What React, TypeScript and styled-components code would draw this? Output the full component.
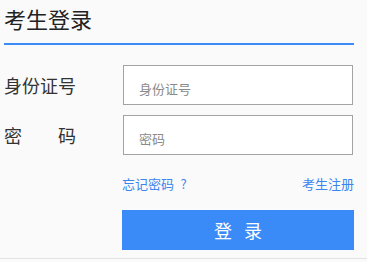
import styled, { createGlobalStyle } from "styled-components";
import { useState } from "react";

const GlobalStyle = createGlobalStyle`
  html, body {
    margin: 0;
    padding: 0;
    background-color: #fafafa;
    font-family: "Noto Sans CJK SC", "Noto Sans", sans-serif;
  }
`;

const Panel = styled.div`
  width: 367px;
  height: 259px;
  box-sizing: border-box;
  padding: 0 13px 0 4px;
  border-bottom: 1px solid #e3e3e3; /* linha cinza no rodapé */
`;

const Title = styled.h2`
  margin: 0;
  height: 43px;
  line-height: 36px;
  font-size: 22px;
  font-weight: normal;
  color: #222;
  border-bottom: 2px solid #3a8bf5;
`;

const Form = styled.form`
  margin-top: 20px;
  display: flex;
  flex-direction: column;
  gap: 10px;
`;

const Row = styled.div`
  display: grid;
  grid-template-columns: 119px 230px;
  align-items: center;
`;

const Label = styled.label`
  display: block;
  width: 72px;
  font-size: 18px;
  color: #333;
  text-align: justify;
  text-align-last: justify;
`;

const Input = styled.input`
  box-sizing: border-box;
  width: 230px;
  height: 40px;
  padding: 6px 15px 0;
  border: 1px solid #a3a3a3;
  background-color: #fff;
  font-family: inherit;
  font-size: 13px;
  color: #333;
  outline: none;

  &::placeholder {
    color: #8a8a8a;
  }
`;

const Links = styled.div`
  margin: 16px 0 0 118px;
  width: 232px;
  height: 24px;
  display: flex;
  justify-content: space-between;
  align-items: center;
`;

const TextLink = styled.a`
  font-size: 13px;
  color: #3a86ee;
  text-decoration: none;
  cursor: pointer;
`;

const Button = styled.button`
  display: block;
  margin: 15px 0 0 118px;
  width: 232px;
  height: 40px;
  padding: 0 0 0 4px;
  border: none;
  background-color: #3a8bf8;
  color: #fff;
  font-family: inherit;
  font-size: 18px;
  letter-spacing: 4px;
  cursor: pointer;
`;

export default function App() {
  const [idCard, setIdCard] = useState("");
  const [password, setPassword] = useState("");

  return (
    <>
      <GlobalStyle />
      <Panel>
        <Title>考生登录</Title>
        <Form onSubmit={(e) => e.preventDefault()}>
          <Row>
            <Label htmlFor="idCard">身份证号</Label>
            <Input
              id="idCard"
              value={idCard}
              onChange={(e) => setIdCard(e.target.value)}
              placeholder="身份证号"
            />
          </Row>
          <Row>
            <Label htmlFor="pwd">密码</Label>
            <Input
              id="pwd"
              type="password"
              value={password}
              onChange={(e) => setPassword(e.target.value)}
              placeholder="密码"
            />
          </Row>
        </Form>
        <Links>
          <TextLink>忘记密码{"\u2002"}?</TextLink>
          <TextLink>考生注册</TextLink>
        </Links>
        <Button type="button">登 录</Button>
      </Panel>
    </>
  );
}
